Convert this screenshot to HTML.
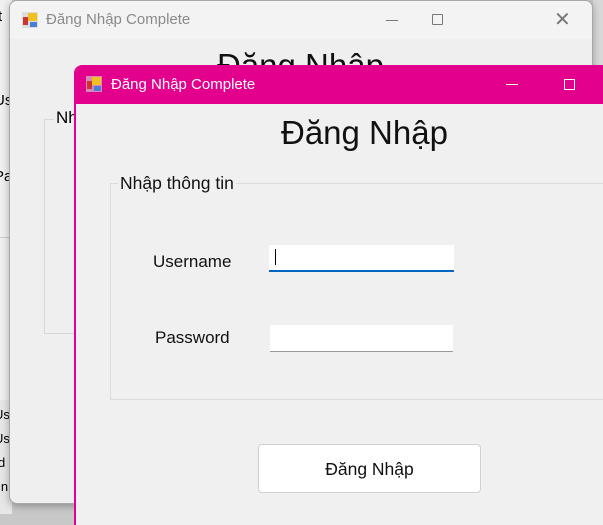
<!DOCTYPE html>
<html><head><meta charset="utf-8"><style>
*{margin:0;padding:0;box-sizing:border-box}
body{width:603px;height:514px;overflow:hidden;position:relative;background:#c8c8c8;font-family:"Liberation Sans","Noto Sans CJK SC",sans-serif}
.a{position:absolute}
.t{white-space:nowrap}
</style></head><body>
<div class="a" style="left:0;top:0;width:12px;height:514px;background:#f0f0f0"></div>
<div class="a" style="left:0;top:237px;width:12px;height:1px;background:#ccc"></div>
<div class="a" style="left:0;top:400px;width:12px;height:114px;background:#e6e6e6"></div>
<div class="a t" style="left:-2px;top:8px;font-size:15px">t</div>
<div class="a t" style="left:-6px;top:92px;font-size:15px">Us</div>
<div class="a t" style="left:-6px;top:168px;font-size:15px">Pa</div>
<div class="a t" style="left:-6px;top:407px;font-size:13px">Use</div>
<div class="a t" style="left:-6px;top:431px;font-size:13px">Use</div>
<div class="a t" style="left:-2px;top:455px;font-size:13px">d</div>
<div class="a t" style="left:-2px;top:479px;font-size:13px">in</div>
<div class="a" style="left:593px;top:0;width:10px;height:65px;background:#d8d8d8"></div>
<div class="a" style="left:9px;top:0;width:584px;height:504px;background:#efefef;border:1px solid #a8a8a8;border-radius:8px;box-shadow:0 2px 8px rgba(0,0,0,.3);overflow:hidden">
 <div class="a" style="left:0;top:0;width:584px;height:38px;background:#f3f3f3"></div>
 <svg class="a" style="left:12px;top:11px" width="16" height="16"><rect x="0" y="0" width="16" height="16" fill="#ddd"/><rect x="1" y="5" width="5" height="8" fill="#c33"/><rect x="6" y="1" width="9" height="8" fill="#f0c020"/><rect x="8" y="10" width="7" height="5" fill="#4a7fd8"/></svg>
 <div class="a t" style="left:36px;top:10px;font-size:15px;color:#8a8a8a">Đăng Nhập Complete</div>
 <div class="a" style="left:376px;top:19px;width:12px;height:1px;background:#777"></div>
 <div class="a" style="left:422px;top:13px;width:11px;height:11px;border:1px solid #777;border-radius:1px"></div>
 <div class="a t" style="left:544px;top:6px;font-size:20px;color:#777">✕</div>
 <div class="a t" style="left:207px;top:46px;font-size:33px;color:#111">Đăng Nhập</div>
 <div class="a" style="left:34px;top:118px;width:200px;height:215px;border:1px solid #d8d8d8"></div>
 <div class="a t" style="left:44px;top:107px;font-size:17px;background:#efefef;padding:0 2px">Nh</div>
</div>
<div class="a" style="left:74px;top:65px;width:540px;height:460px;background:#f0f0f0;border-left:2px solid #e3008c;border-top-left-radius:8px;overflow:hidden">
 <div class="a" style="left:0;top:0;width:540px;height:39px;background:#e3008c"></div>
 <svg class="a" style="left:10px;top:11px" width="16" height="16"><rect x="0" y="0" width="16" height="16" fill="#d58ab8"/><rect x="1" y="5" width="5" height="8" fill="#c33"/><rect x="6" y="1" width="9" height="8" fill="#f0c020"/><rect x="8" y="10" width="7" height="5" fill="#4a7fd8"/></svg>
 <div class="a t" style="left:35px;top:11px;font-size:15px;color:#fff">Đăng Nhập Complete</div>
 <div class="a" style="left:430px;top:19px;width:12px;height:1px;background:#fff"></div>
 <div class="a" style="left:488px;top:14px;width:11px;height:11px;border:1px solid #fff"></div>
 <div class="a t" style="left:205px;top:49px;font-size:33px;color:#111">Đăng Nhập</div>
 <div class="a" style="left:34px;top:118px;width:520px;height:217px;border:1px solid #dcdcdc"></div>
 <div class="a t" style="left:42px;top:108px;font-size:17.5px;color:#111;background:#f0f0f0;padding:0 2px">Nhập thông tin</div>
 <div class="a t" style="left:77px;top:187px;font-size:17px;color:#111">Username</div>
 <div class="a" style="left:193px;top:180px;width:185px;height:27px;background:#fff;border-bottom:2px solid #0067c0"></div>
 <div class="a" style="left:199px;top:184px;width:1px;height:16px;background:#000"></div>
 <div class="a t" style="left:79px;top:263px;font-size:17px;color:#111">Password</div>
 <div class="a" style="left:194px;top:260px;width:183px;height:27px;background:#fff;border-bottom:1px solid #999"></div>
 <div class="a" style="left:182px;top:379px;width:223px;height:49px;background:#fff;border:1px solid #d0d0d0;border-radius:4px"></div>
 <div class="a t" style="left:182px;top:394px;width:223px;text-align:center;font-size:17.5px;color:#111">Đăng Nhập</div>
</div>
</body></html>
